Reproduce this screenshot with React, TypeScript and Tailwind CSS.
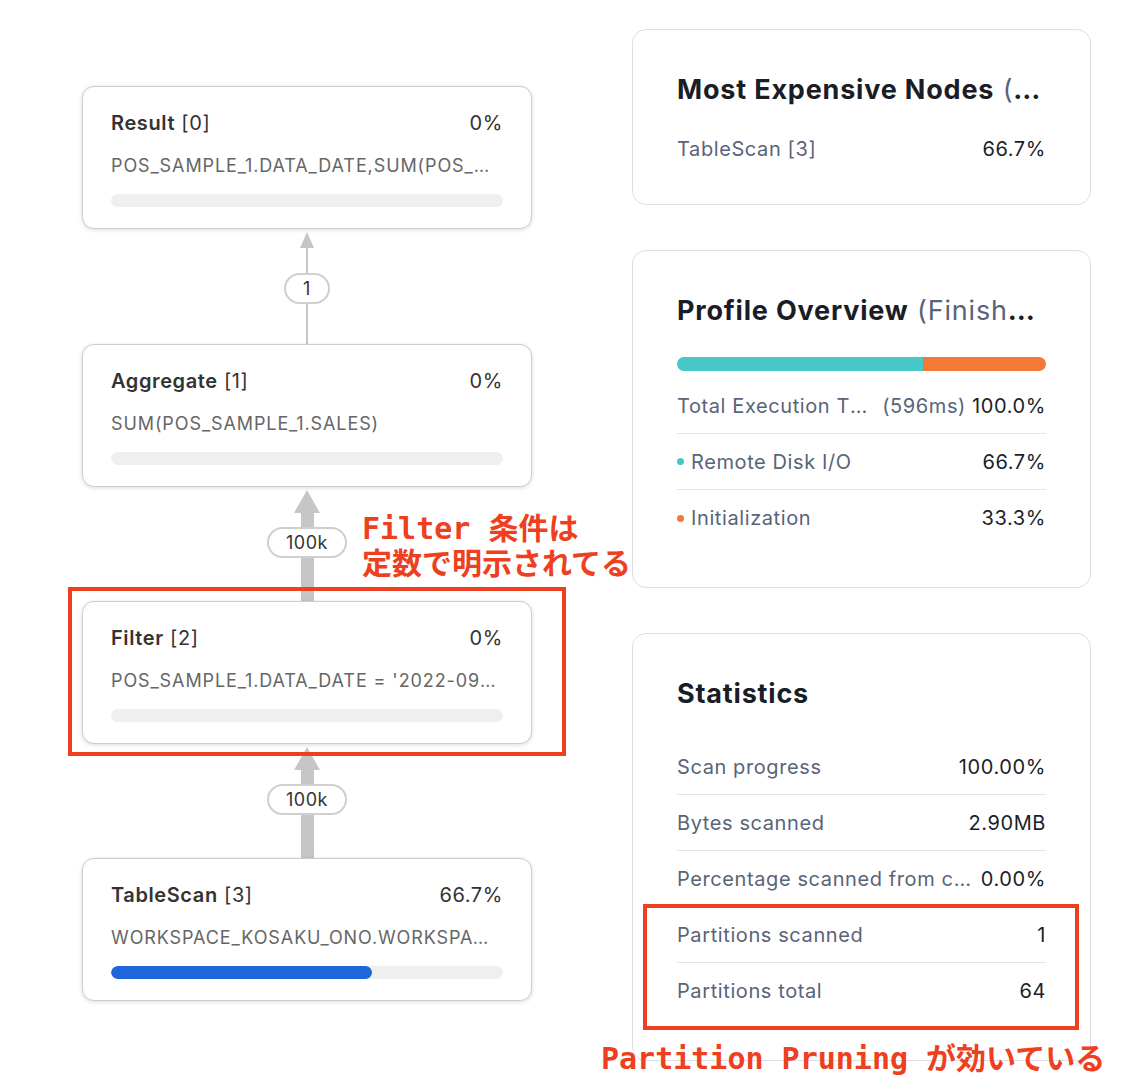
import React from 'react';

type PlanNode = { name: string; id: number; pct: string; detail: string; fill: number };

const nodes: PlanNode[] = [
  { name: 'Result', id: 0, pct: '0%', detail: 'POS_SAMPLE_1.DATA_DATE,SUM(POS_SAMPLE_1.SALES)', fill: 0 },
  { name: 'Aggregate', id: 1, pct: '0%', detail: 'SUM(POS_SAMPLE_1.SALES)', fill: 0 },
  { name: 'Filter', id: 2, pct: '0%', detail: "POS_SAMPLE_1.DATA_DATE = '2022-09-01 00:00:00.000'", fill: 0 },
  { name: 'TableScan', id: 3, pct: '66.7%', detail: 'WORKSPACE_KOSAKU_ONO.WORKSPACE.POS_SAMPLE_1', fill: 66.7 },
];

const edges = [
  { label: '1', thick: false },
  { label: '100k', thick: true },
  { label: '100k', thick: true },
];

const NodeCard: React.FC<{ node: PlanNode }> = ({ node }) => (
  <div className="h-[143px] bg-white border border-[#cdcdcd] rounded-[12px] shadow-[0_1px_4px_rgba(0,0,0,0.14)] px-[28px] pt-[22px]">
    <div className="flex justify-between items-center h-[28px] text-[20px] tracking-[0.03em] text-[#333]">
      <span><span className="font-semibold">{node.name}</span> [{node.id}]</span>
      <span>{node.pct}</span>
    </div>
    <div className="mt-[16px] h-[26px] leading-[26px] text-[18px] tracking-[0.05em] text-[#666] truncate pr-[6px]">{node.detail}</div>
    <div className="mt-[15px] h-[13px] rounded-full bg-[#efefef] overflow-hidden">
      {node.fill > 0 && <div className="h-full rounded-full bg-[#1f66db]" style={{ width: `${node.fill}%` }} />}
    </div>
  </div>
);

const Edge: React.FC<{ label: string; thick: boolean }> = ({ label, thick }) => (
  <div className={`flex flex-col items-center ${thick ? 'h-[114px]' : 'h-[115px]'}`}>
    {thick ? (
      <>
        <svg width="26" height="26" viewBox="0 0 26 26" className="mt-[3px] block">
          <polygon points="13,0 26,23 0,23" fill="#c6c6c6" />
        </svg>
        <div className="w-[13px] h-[14px] bg-[#c6c6c6] -mt-[3px]" />
      </>
    ) : (
      <>
        <svg width="16" height="16" viewBox="0 0 16 16" className="mt-[3px] block">
          <polygon points="8,0 15,16 1,16" fill="#c6c6c6" />
        </svg>
        <div className="w-[2px] h-[25px] bg-[#c6c6c6]" />
      </>
    )}
    <div className={`h-[31px] ${thick ? 'w-[80px]' : 'w-[46px]'} rounded-full border-2 border-[#cfcfcf] bg-white flex items-center justify-center text-[18px] tracking-[0.03em] text-[#333]`}>
      {label}
    </div>
    <div className={`flex-1 ${thick ? 'w-[13px]' : 'w-[2px]'} bg-[#c6c6c6]`} />
  </div>
);

const Row: React.FC<{ label: React.ReactNode; value: string; last?: boolean }> = ({ label, value, last }) => (
  <div className={`h-[56px] flex items-center justify-between gap-[8px] ${last ? '' : 'border-b border-[#e2e4e9]'}`}>
    <div className="min-w-0 flex-1 truncate text-[#59637a]">{label}</div>
    <div className="text-[#1b1f29] shrink-0">{value}</div>
  </div>
);

const Dot: React.FC<{ color: string }> = ({ color }) => (
  <span className={`inline-block w-[7px] h-[7px] rounded-full mr-[7px] align-middle -mt-[3px] ${color}`} />
);

const Panel: React.FC<{ children: React.ReactNode }> = ({ children }) => (
  <div className="border border-[#dcdfe6] rounded-[14px] bg-white px-[44px] pt-[44px] pb-[41px]">{children}</div>
);

const PanelTitle: React.FC<{ main: string; sub?: string }> = ({ main, sub }) => (
  <div className="h-[32px] leading-[32px] text-[27px] tracking-[0.03em] font-bold text-[#1a1d26] truncate">
    {main}
    {sub && <span className="font-normal text-[#59637a]"> {sub}</span>}
  </div>
);

const mono = "font-['DejaVu_Sans_Mono','Noto_Sans_CJK_JP',monospace]";

export default function App() {
  return (
    <div className="relative w-[1136px] h-[1092px] bg-white overflow-hidden font-['Inter','Noto_Sans',sans-serif] flex">
      {/* query plan */}
      <div className="ml-[82px] pt-[86px] w-[450px] flex flex-col">
        {nodes.map((n, i) => (
          <React.Fragment key={n.id}>
            <NodeCard node={n} />
            {i < edges.length && <Edge label={edges[i].label} thick={edges[i].thick} />}
          </React.Fragment>
        ))}
      </div>

      {/* side panels */}
      <div className="ml-[100px] pt-[29px] w-[459px] flex flex-col gap-[45px] text-[20px] tracking-[0.03em]">
        <Panel>
          <PanelTitle main="Most Expensive Nodes" sub="(1 of 4)" />
          <div className="mt-[29px] h-[28px] flex items-center justify-between">
            <span className="text-[#59637a]">TableScan [3]</span>
            <span className="text-[#1b1f29]">66.7%</span>
          </div>
        </Panel>

        <Panel>
          <PanelTitle main="Profile Overview" sub="(Finished in 596ms)" />
          <div className="mt-[30px] h-[14px] rounded-full overflow-hidden flex">
            <div className="h-full bg-[#47c7c8]" style={{ width: '66.7%' }} />
            <div className="h-full flex-1 bg-[#f27a34]" />
          </div>
          <div className="mt-[7px]">
            <div className="h-[56px] flex items-center border-b border-[#e2e4e9]">
              <div className="min-w-0 flex-1 truncate text-[#59637a]">Total Execution Time</div>
              <div className="shrink-0 ml-[12px] text-[#59637a]">(596ms)</div>
              <div className="shrink-0 ml-[6px] text-[#1b1f29]">100.0%</div>
            </div>
            <Row label={<><Dot color="bg-[#47c7c8]" />Remote Disk I/O</>} value="66.7%" />
            <Row label={<><Dot color="bg-[#f27a34]" />Initialization</>} value="33.3%" last />
          </div>
        </Panel>

        <Panel>
          <PanelTitle main="Statistics" />
          <div className="mt-[29px]">
            <Row label="Scan progress" value="100.00%" />
            <Row label="Bytes scanned" value="2.90MB" />
            <Row label="Percentage scanned from cache" value="0.00%" />
            <Row label="Partitions scanned" value="1" />
            <Row label="Partitions total" value="64" last />
          </div>
        </Panel>
      </div>

      {/* annotations */}
      <div className="absolute left-[68px] top-[587px] w-[498px] h-[169px] border-[4px] border-[#ee3f20]" />
      <div className={`absolute left-[362px] top-[511px] text-[30px] leading-[35px] font-bold text-[#ee3f20] whitespace-pre ${mono}`}>
        <div>Filter 条件は</div>
        <div>定数で明示されてる</div>
      </div>
      <div className="absolute left-[643px] top-[904px] w-[436px] h-[126px] border-[4px] border-[#ee3f20]" />
      <div className={`absolute left-[601px] top-[1041px] text-[30px] leading-[35px] font-bold text-[#ee3f20] whitespace-pre ${mono}`}>
        Partition Pruning が効いている
      </div>
    </div>
  );
}
